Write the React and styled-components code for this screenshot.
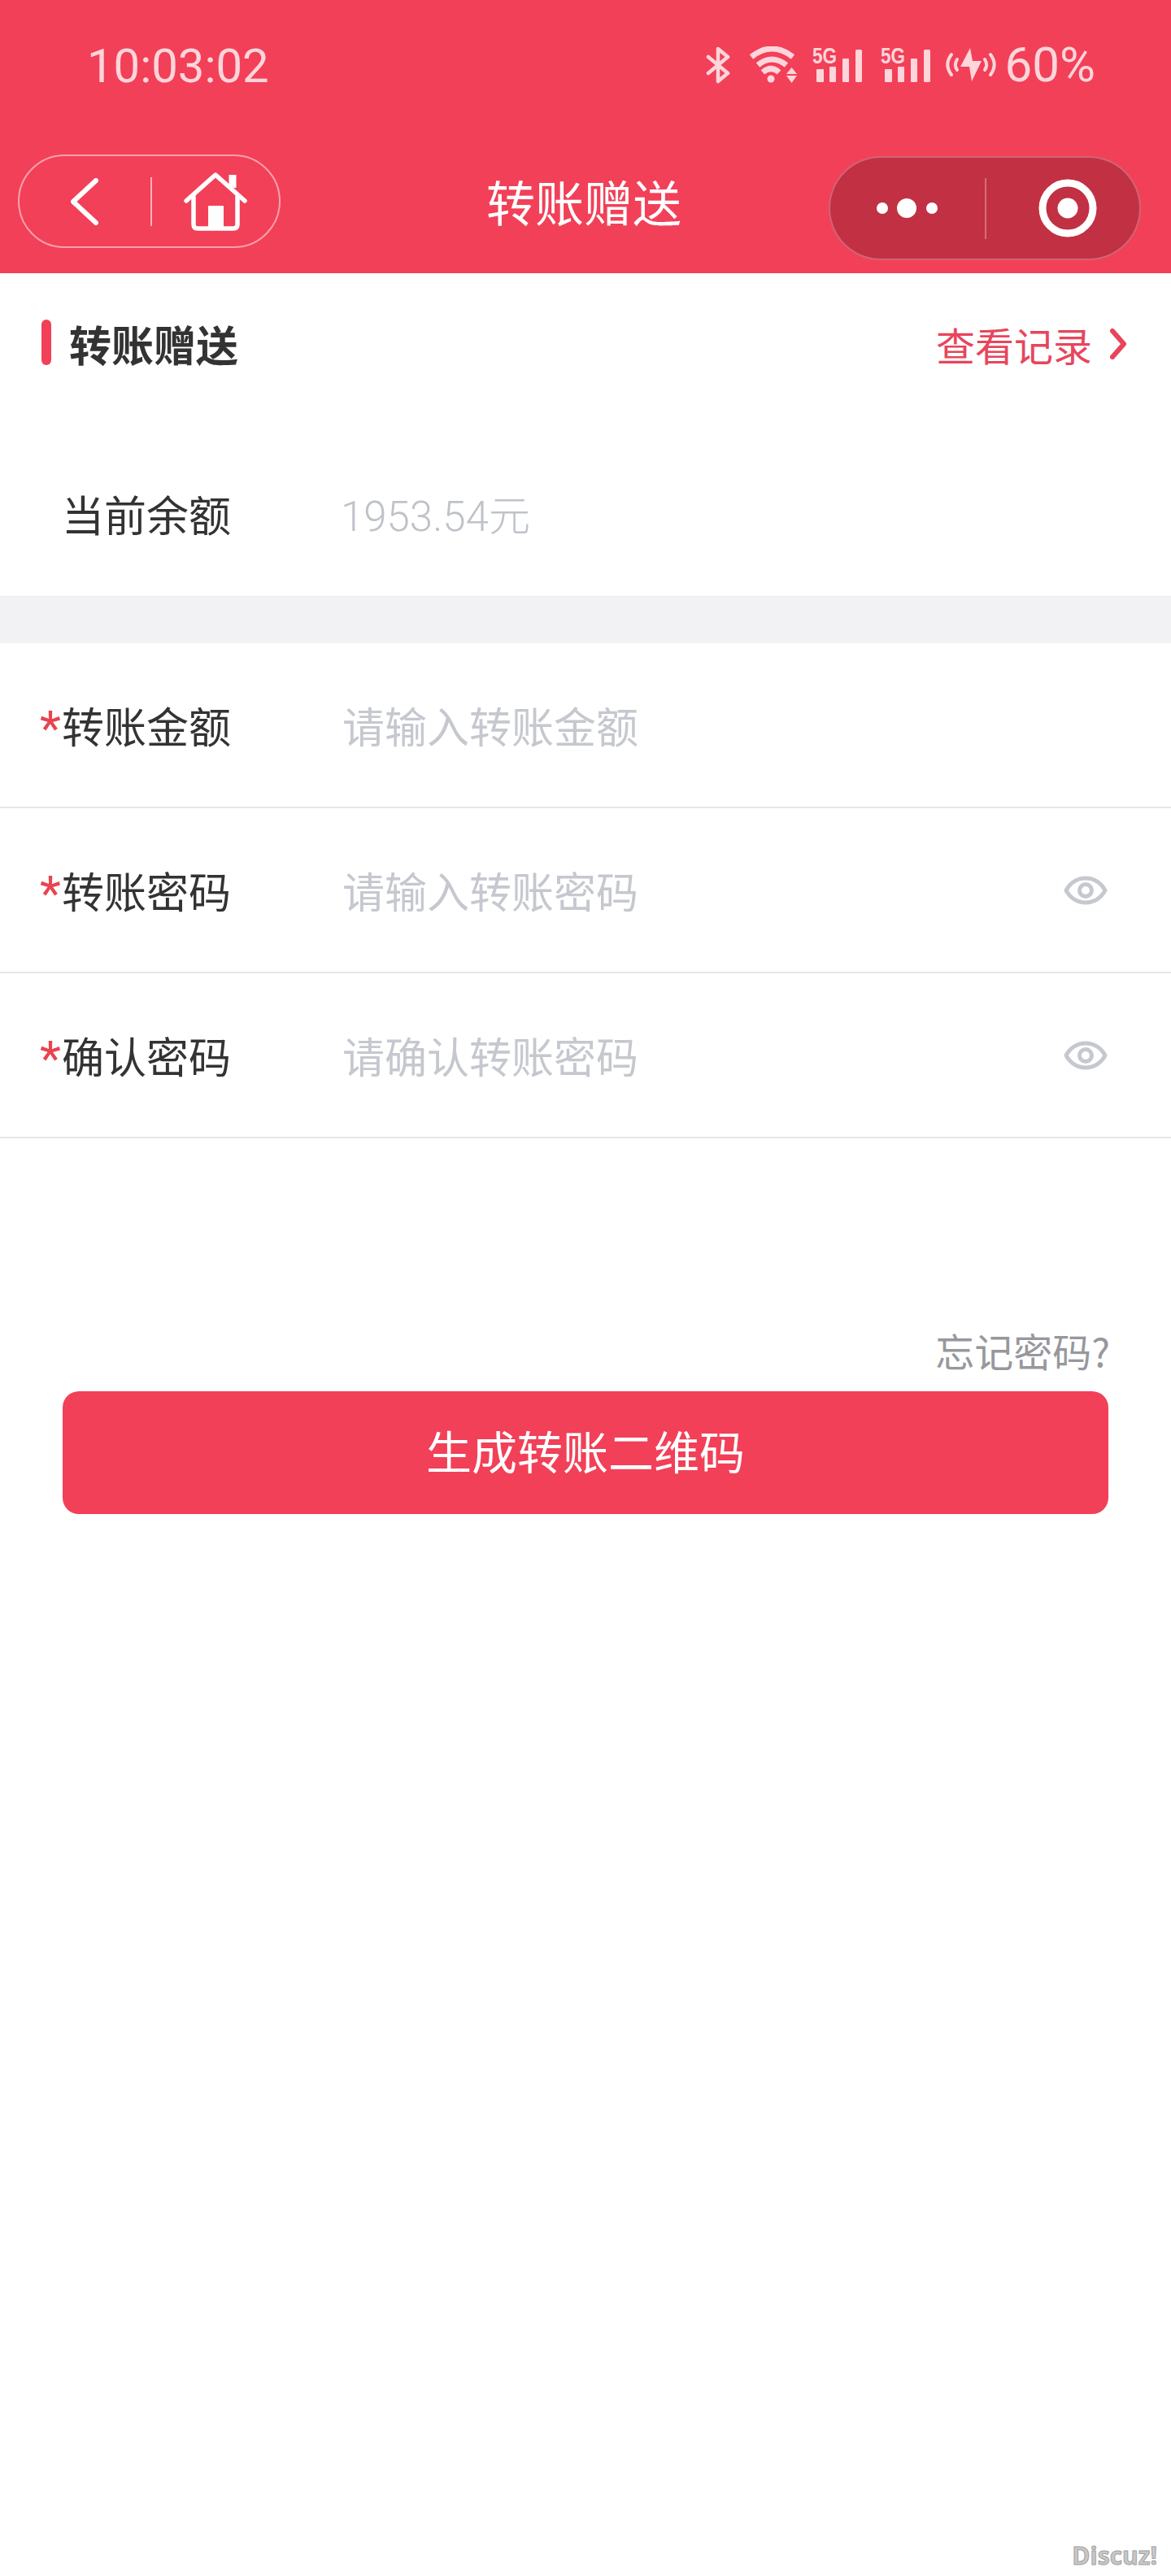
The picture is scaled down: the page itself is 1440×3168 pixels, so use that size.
import React from 'react';
import styled, { createGlobalStyle } from 'styled-components';

const RED = '#f24058';
const TINT = '#fed5da';
const CJK = '"Noto Sans CJK SC", "Noto Sans", sans-serif';
const NUM = 'Roboto, "Noto Sans CJK SC", sans-serif';

const GlobalStyle = createGlobalStyle`
  html, body { margin: 0; padding: 0; background: #fff; }
  * { box-sizing: border-box; }
  body { font-family: ${CJK}; }
`;

const Page = styled.div`
  position: relative;
  width: 1440px;
  height: 3168px;
  background: #fff;
  overflow: hidden;
`;

const Header = styled.header`
  background: ${RED};
  height: 336px;
  display: flex;
  flex-direction: column;
`;

const StatusBar = styled.div`
  height: 162px;
  display: flex;
  align-items: center;
  justify-content: space-between;
  padding: 0 93px 0 107px;
  color: ${TINT};
`;

const Clock = styled.span`
  font-family: ${NUM};
  font-size: 58px;
  line-height: 1;
`;

const StatusIcons = styled.div`
  display: flex;
  align-items: center;
  margin-bottom: 2px;
`;

const Battery = styled.span`
  font-family: ${NUM};
  font-size: 60px;
  line-height: 1;
  margin-left: 11px;
`;

const NavBar = styled.div`
  display: grid;
  grid-template-columns: 1fr auto 1fr;
  align-items: start;
  padding: 28px 37px 0 22px;
`;

const LeftCapsule = styled.div`
  width: 323px;
  height: 115px;
  border: 2px solid rgba(255, 255, 255, 0.5);
  border-radius: 58px;
  display: flex;
  align-items: center;
  padding-left: 63px;
`;

const RightCapsule = styled.div`
  justify-self: end;
  width: 384px;
  height: 128px;
  margin-top: 2px;
  background: #c23044;
  border: 2px solid rgba(255, 255, 255, 0.25);
  border-radius: 64px;
  display: flex;
  align-items: center;
  padding-left: 57px;
`;

const CapsuleDivider = styled.i`
  display: block;
  width: 2px;
  height: ${p => p.$h}px;
  margin: 0 ${p => p.$after}px 0 ${p => p.$before}px;
  background: rgba(255, 255, 255, ${p => p.$alpha});
`;

const Title = styled.h1`
  margin: 0 0 0 11px;
  padding-top: 17px;
  font-size: 60px;
  line-height: 80px;
  font-weight: 400;
  color: #fff;
  text-align: center;
  width: 240px;
  white-space: nowrap;
`;

const SectionHead = styled.div`
  height: 198px;
  padding: 57px 55px 0 51px;
  display: flex;
  align-items: flex-start;
  justify-content: space-between;
`;

const SectionTitle = styled.div`
  display: flex;
  align-items: flex-start;
`;

const Bar = styled.i`
  display: block;
  width: 12px;
  height: 56px;
  border-radius: 6px;
  background: ${RED};
  margin-right: 22px;
`;

const SectionText = styled.h2`
  margin: -2px 0 0;
  font-size: 52px;
  line-height: 64px;
  font-weight: 700;
  color: #333;
`;

const RecordLink = styled.a`
  display: flex;
  align-items: center;
  gap: 22px;
  height: 64px;
  margin-top: -2px;
  font-size: 48px;
  color: #e8455b;
`;

const BalanceRow = styled.div`
  height: 199px;
  display: flex;
  align-items: center;
  padding: 0 0 4px 76px;
`;

const Label = styled.span`
  position: relative;
  width: 343px;
  flex: none;
  font-size: 52px;
  line-height: 64px;
  color: #333;
`;

const Star = styled.b`
  position: absolute;
  left: -27px;
  top: 4px;
  font-family: ${NUM};
  font-weight: 400;
  font-size: 60px;
  line-height: 64px;
  color: #e94350;
`;

const Balance = styled.span`
  font-family: ${NUM};
  font-weight: 300;
  font-size: 51px;
  line-height: 64px;
  margin-top: 8px;
  color: #bfc2c9;
`;

const Band = styled.div`
  height: 58px;
  background: #f2f2f4;
  border-top: 1px solid #e9e9ee;
`;

const Row = styled.div`
  height: 203px;
  padding: 0 78px 0 76px;
  display: flex;
  align-items: center;
  border-bottom: 2px solid #e6e6ea;
`;

const Field = styled.span`
  flex: 1;
  padding-left: 2px;
  font-size: 52px;
  line-height: 64px;
  color: #c5c8ce;
`;

const Actions = styled.div`
  padding: 228px 77px 0;
  display: flex;
  flex-direction: column;
`;

const Forgot = styled.a`
  align-self: flex-end;
  margin-right: -2px;
  font-size: 48px;
  line-height: 64px;
  color: #97989d;
  font-family: ${CJK};
`;

const Submit = styled.button`
  margin-top: 19px;
  height: 151px;
  width: 100%;
  padding: 0 0 8px;
  border: none;
  border-radius: 20px;
  background: ${RED};
  color: #fff;
  font-family: ${CJK};
  font-size: 56px;
`;

const Watermark = styled.div`
  position: absolute;
  right: 17px;
  bottom: 8px;
  font-family: "Open Sans", sans-serif;
  font-weight: 700;
  font-size: 30px;
  line-height: 34px;
  color: #c8c8c8;
  -webkit-text-stroke: 1px #a2a2a2;
`;

const BluetoothIcon = () => (
  <svg width="30" height="46" viewBox="0 0 30 46" fill="none" stroke={TINT} strokeWidth="4.5" strokeLinejoin="round" strokeLinecap="round">
    <path d="M3 13 L27 33 L15 43 V3 L27 13 L3 33" />
  </svg>
);

const WifiIcon = () => (
  <svg width="60" height="46" viewBox="0 0 60 46" fill="none" style={{ marginLeft: 24 }}>
    <g stroke={TINT} strokeWidth="7">
      <path d="M2 13 Q27 -7 53 13" />
      <path d="M10 23 Q27 9 45 23" />
      <path d="M16 32 Q26 23 36 32" />
    </g>
    <circle cx="26" cy="40" r="4.5" fill={TINT} />
    <path d="M45 34 L51.5 26 L58 34 Z M45 36 H58 L51.5 45 Z" fill={TINT} />
  </svg>
);

const SignalIcon = ({ gap }) => (
  <svg width="62" height="44" viewBox="0 0 62 44" overflow="visible" style={{ marginLeft: gap }}>
    <text x="0" y="20" fontFamily='"Liberation Sans", sans-serif' fontWeight="700" fontSize="27" fill={TINT} textLength="30" lengthAdjust="spacingAndGlyphs">5G</text>
    <rect x="5" y="27" width="9" height="16" rx="1" fill={TINT} />
    <rect x="21" y="24" width="8" height="19" rx="1" fill={TINT} />
    <rect x="37" y="14" width="8" height="29" rx="1" fill={TINT} />
    <rect x="53" y="3" width="8" height="40" rx="1.5" fill={TINT} />
  </svg>
);

const ChargeIcon = () => (
  <svg width="62" height="42" viewBox="0 0 62 42" fill="none" style={{ marginLeft: 18 }}>
    <path d="M30 0 L18 23 H29 L32 41 L44 16 H33 Z" fill={TINT} />
    <g stroke={TINT} strokeWidth="4" strokeLinecap="round">
      <path d="M7 8 C1 16 1 25 7 33" />
      <path d="M14 14 C11 19 11 23 14 27" />
      <path d="M55 8 C61 16 61 25 55 33" />
      <path d="M48 14 C51 19 51 23 48 27" />
    </g>
  </svg>
);

const BackIcon = () => (
  <svg width="34" height="58" viewBox="0 0 34 58" fill="none" stroke="#fff" strokeWidth="6" strokeLinecap="round" strokeLinejoin="round">
    <path d="M31 3 L3 29 L31 55" />
  </svg>
);

const HomeIcon = () => (
  <svg width="78" height="72" viewBox="0 0 78 72" fill="none" stroke="#fff" strokeWidth="5.5" strokeLinecap="round" strokeLinejoin="round">
    <path d="M3 35 L39 3 L75 35" />
    <path d="M12 30 V64 Q12 69 17 69 H61 Q66 69 66 64 V30" />
    <path d="M60 19 V3" strokeWidth="9" strokeLinecap="butt" />
    <rect x="30" y="41" width="19" height="28" fill="#fff" stroke="none" rx="1" />
  </svg>
);

const MoreIcon = () => (
  <svg width="76" height="24" viewBox="0 0 76 24" fill="#fff">
    <circle cx="7" cy="12" r="7" />
    <circle cx="37" cy="12" r="12" />
    <circle cx="68" cy="12" r="7" />
  </svg>
);

const TargetIcon = () => (
  <svg width="72" height="72" viewBox="0 0 72 72" fill="none">
    <circle cx="36" cy="36" r="31" stroke="#fff" strokeWidth="9" />
    <circle cx="36" cy="36" r="12.5" fill="#fff" />
  </svg>
);

const ChevronIcon = () => (
  <svg width="20" height="38" viewBox="0 0 20 38" fill="none" stroke="#e8455b" strokeWidth="6" strokeLinecap="round" strokeLinejoin="round">
    <path d="M3 3 L17 19 L3 35" />
  </svg>
);

const EyeIcon = () => (
  <svg width="54" height="38" viewBox="0 0 54 38" fill="none" stroke="#c5c8ce" strokeWidth="5">
    <path d="M3 19 C14 -1 40 -1 51 19 C40 39 14 39 3 19 Z" strokeLinejoin="round" />
    <circle cx="27" cy="19" r="7.5" />
  </svg>
);

const rows = [
  { label: '转账金额', hint: '请输入转账金额' },
  { label: '转账密码', hint: '请输入转账密码', eye: true },
  { label: '确认密码', hint: '请确认转账密码', eye: true },
];

export default function App() {
  return (
    <Page>
      <GlobalStyle />
      <Header>
        <StatusBar>
          <Clock>10:03:02</Clock>
          <StatusIcons>
            <BluetoothIcon />
            <WifiIcon />
            <SignalIcon gap={17} />
            <SignalIcon gap={22} />
            <ChargeIcon />
            <Battery>60%</Battery>
          </StatusIcons>
        </StatusBar>
        <NavBar>
          <LeftCapsule>
            <BackIcon />
            <CapsuleDivider $h={60} $before={64} $after={39} $alpha={0.6} />
            <HomeIcon />
          </LeftCapsule>
          <Title>转账赠送</Title>
          <RightCapsule>
            <MoreIcon />
            <CapsuleDivider $h={75} $before={57} $after={64} $alpha={0.3} />
            <TargetIcon />
          </RightCapsule>
        </NavBar>
      </Header>

      <SectionHead>
        <SectionTitle>
          <Bar />
          <SectionText>转账赠送</SectionText>
        </SectionTitle>
        <RecordLink>
          查看记录
          <ChevronIcon />
        </RecordLink>
      </SectionHead>

      <BalanceRow>
        <Label>当前余额</Label>
        <Balance>1953.54元</Balance>
      </BalanceRow>
      <Band />

      {rows.map(r => (
        <Row key={r.label}>
          <Label>
            <Star>*</Star>
            {r.label}
          </Label>
          <Field>{r.hint}</Field>
          {r.eye && <EyeIcon />}
        </Row>
      ))}

      <Actions>
        <Forgot>忘记密码?</Forgot>
        <Submit>生成转账二维码</Submit>
      </Actions>

      <Watermark>Discuz!</Watermark>
    </Page>
  );
}
